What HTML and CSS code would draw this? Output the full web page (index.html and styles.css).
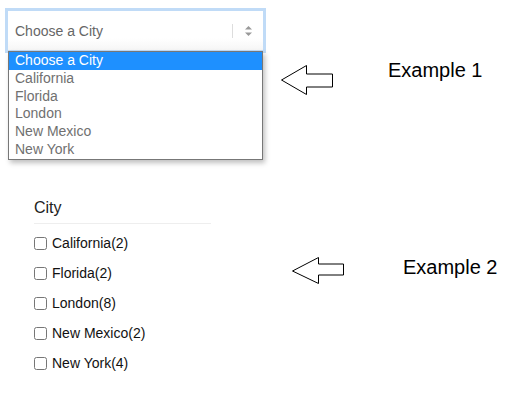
FILE: index.html
```html
<!DOCTYPE html>
<html lang="en">
<head>
    <meta charset="UTF-8">
    <meta name="viewport" content="width=device-width, initial-scale=1.0">
    <title>City filter</title>
    <link rel="stylesheet" href="styles.css">
</head>
<body>
    <div class="row row-one">
        <div class="picker">
            <div class="select">
                <span class="select-value">Choose a City</span>
                <span class="select-sep"></span>
                <span class="select-caret">
                    <svg width="7" height="10" viewBox="0 0 7 10">
                        <polygon points="3.5,0 7,3.5 0,3.5" fill="#999"/>
                        <polygon points="0,6.5 7,6.5 3.5,10" fill="#999"/>
                    </svg>
                </span>
            </div>
            <ul class="options">
                <li class="active">Choose a City</li>
                <li>California</li>
                <li>Florida</li>
                <li>London</li>
                <li>New Mexico</li>
                <li>New York</li>
            </ul>
        </div>
        <svg class="arrow arrow-one" width="53" height="31" viewBox="0 0 53 31">
            <polygon points="0.5,15 25.5,0.5 25.5,9 51.5,9 51.5,22 25.5,22 25.5,29.5" fill="#fff" stroke="#000" stroke-width="1"/>
        </svg>
        <div class="label label-one">Example 1</div>
    </div>

    <div class="row row-two">
        <div class="filter">
            <h2>City</h2>
            <ul class="checks">
                <li><input type="checkbox"><span>California(2)</span></li>
                <li><input type="checkbox"><span>Florida(2)</span></li>
                <li><input type="checkbox"><span>London(8)</span></li>
                <li><input type="checkbox"><span>New Mexico(2)</span></li>
                <li><input type="checkbox"><span>New York(4)</span></li>
            </ul>
        </div>
        <svg class="arrow arrow-two" width="53" height="28" viewBox="0 0 53 28">
            <polygon points="0.5,14 26.5,0.5 26.5,7 51.5,7 51.5,18 26.5,18 26.5,26.5" fill="#fff" stroke="#000" stroke-width="1"/>
        </svg>
        <div class="label label-two">Example 2</div>
    </div>
</body>
</html>
```

FILE: styles.css
```css
* {
    box-sizing: border-box;
    margin: 0;
    padding: 0;
}
body {
    font-family: "Liberation Sans", Arial, sans-serif;
    background-color: #fff;
    color: #000;
}
.row {
    display: flex;
    align-items: flex-start;
}
.row-one {
    height: 190px;
    padding: 11px 0 0 8px;
}
.picker {
    width: 255px;
}
.select {
    height: 39px;
    display: flex;
    align-items: center;
    padding-left: 7px;
    background: linear-gradient(#fff 70%, #f6f6f6);
    box-shadow: 0 0 0 3px #c0dbf7;
    font-size: 14px;
    color: #666;
}
.select-value {
    flex: 1;
}
.select-sep {
    width: 1px;
    height: 14px;
    background-color: #ddd;
}
.select-caret {
    width: 30px;
    display: flex;
    justify-content: center;
}
.select-caret svg {
    display: block;
}
.options {
    list-style: none;
    margin-top: 1px;
    border: 1px solid #777;
    background-color: #fff;
    box-shadow: 2px 3px 5px rgba(0,0,0,0.25);
    position: relative;
}
.options li {
    font-size: 14px;
    line-height: 17.75px;
    padding-left: 6px;
    color: #707070;
}
.options li.active {
    background-color: #1e90ff;
    color: #fff;
}
.arrow {
    display: block;
    flex: none;
}
.arrow-one {
    margin: 54px 0 0 18px;
}
.label {
    font-size: 20px;
    line-height: 23px;
}
.label-one {
    margin: 48px 0 0 54px;
}
.row-two {
    padding: 8px 0 0 34px;
}
.filter {
    width: 177px;
}
.filter h2 {
    font-size: 16px;
    font-weight: normal;
    line-height: 20px;
    color: #222;
    padding-bottom: 5px;
    border-bottom: 1px solid #eee;
}
.checks {
    list-style: none;
    margin-top: 4px;
}
.checks li {
    height: 30px;
    display: flex;
    align-items: center;
    gap: 5px;
    font-size: 14px;
    color: #111;
}
.checks input {
    width: 13px;
    height: 13px;
    margin: 0;
}
.arrow-two {
    margin: 59px 0 0 81px;
}
.label-two {
    margin: 58px 0 0 58px;
}
```
